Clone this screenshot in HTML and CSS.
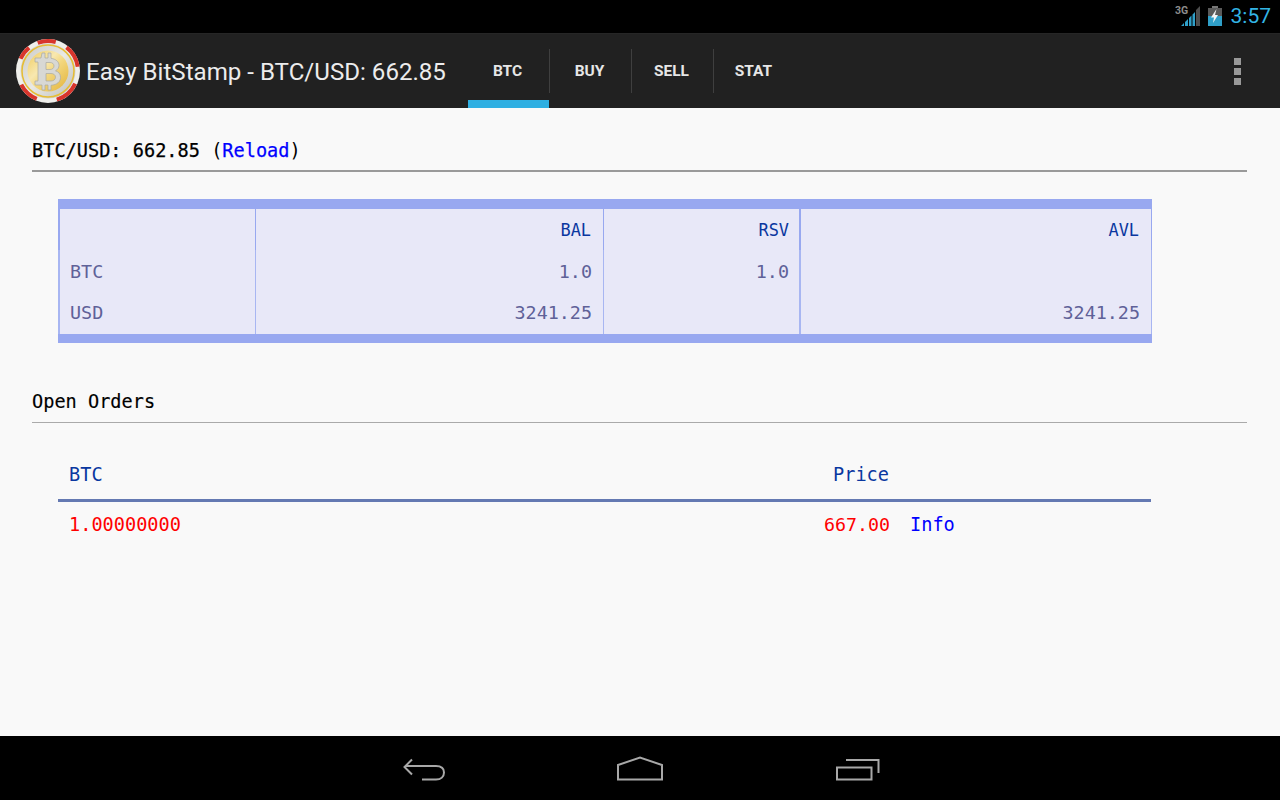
FILE: index.html
```html
<!DOCTYPE html>
<html lang="en">
<head>
<meta charset="utf-8">
<title>Easy BitStamp</title>
<link rel="stylesheet" href="styles.css">
</head>
<body>
<div class="screen">
  <header class="status">
    <svg class="signal" width="26" height="22" viewBox="1175 5 26 22">
      <path d="M1196 10l4-4v20h-4z" fill="#4d4d4d"/>
      <path d="M1181 26l3-3v3zM1185 26v-4l3-3v7zM1189 26v-8l2.500-2.500V26zM1192.500 26V14.500l2.500-2.500V26z" fill="#2f9fc8"/>
      <text x="1175" y="14" class="net">3G</text>
    </svg>
    <svg class="battery" width="14" height="20" viewBox="1208 6 14 20">
      <rect x="1212" y="6" width="6" height="2" fill="#777"/>
      <rect x="1208" y="8" width="14" height="8" fill="#5a5a5a"/>
      <rect x="1208" y="16" width="14" height="10" fill="#2f9fc8"/>
      <path d="M1216.500 9L1211 17.500h3l-1 5.500 5-8h-3z" fill="#f4f4f4"/>
    </svg>
    <span class="clock">3:57</span>
  </header>
  <nav class="actionbar">
    <svg class="coin" width="66" height="66" viewBox="0 0 66 66">
      <defs>
        <linearGradient id="gold" x1="0" y1="0" x2="1" y2="1">
          <stop offset="0" stop-color="#f0cb5c"/>
          <stop offset=".38" stop-color="#f8e8b0"/>
          <stop offset=".55" stop-color="#f3d77e"/>
          <stop offset="1" stop-color="#e2b238"/>
        </linearGradient>
        <linearGradient id="silver" x1="0" y1="0" x2="1" y2="1">
          <stop offset="0" stop-color="#c9c9c4"/>
          <stop offset=".5" stop-color="#e9e9e5"/>
          <stop offset="1" stop-color="#bdbdb8"/>
        </linearGradient>
      </defs>
      <circle cx="33" cy="33" r="32" fill="#efefeb"/>
      <g class="chip-red">
        <circle cx="33" cy="33" r="30" pathLength="360" stroke-dasharray="35 325" transform="rotate(-110 33 33)"/>
        <circle cx="33" cy="33" r="30" pathLength="360" stroke-dasharray="44 316" transform="rotate(-52 33 33)"/>
        <circle cx="33" cy="33" r="30" pathLength="360" stroke-dasharray="48 312" transform="rotate(25 33 33)"/>
        <circle cx="33" cy="33" r="30" pathLength="360" stroke-dasharray="41 319" transform="rotate(112 33 33)"/>
        <circle cx="33" cy="33" r="30" pathLength="360" stroke-dasharray="27 333" transform="rotate(204 33 33)"/>
      </g>
      <circle cx="33" cy="33" r="27.500" fill="url(#silver)"/>
      <circle cx="33" cy="33" r="26" fill="none" stroke="#e6bd33" stroke-width="1.500"/>
      <circle cx="33" cy="33" r="20.500" fill="url(#gold)"/>
      <path d="M27 15h3v5h3v-5h3v5.300c5 .8 8 3.500 8 7 0 2.500-1.500 4.500-3.500 5.500 3 1 5 3 5 6.500 0 4.500-3.500 7.500-9.500 8V52h-3v-5h-3v5h-3v-5h-7v-4h3V24h-3v-4h6zM31 24.500v7h4c2.500 0 4-1.500 4-3.500s-1.500-3.500-4-3.500zM31 35.500v7.500h5c2.500 0 4.500-1.500 4.500-3.800S38.500 35.500 36 35.500z" fill="#d8d8d4" fill-rule="evenodd" stroke="#a9a9a2" stroke-width=".7"/>
    </svg>
    <h1 class="title">Easy BitStamp - BTC/USD: 662.85</h1>
    <ul class="tabs">
      <li class="tab tab-active">BTC</li>
      <li class="tab">BUY</li>
      <li class="tab">SELL</li>
      <li class="tab">STAT</li>
    </ul>
    <div class="overflow"><i></i><i></i><i></i></div>
  </nav>
  <main class="content">
    <h2 class="heading">BTC/USD: 662.85 <span class="plain">(</span><a class="link">Reload</a><span class="plain">)</span></h2>
    <div class="balances">
      <div class="cell cell-first head"></div>
      <div class="cell head">BAL</div>
      <div class="cell head cell-thick">RSV</div>
      <div class="cell head">AVL</div>
      <div class="cell cell-first row">BTC</div>
      <div class="cell row">1.0</div>
      <div class="cell row cell-thick">1.0</div>
      <div class="cell row"></div>
      <div class="cell cell-first row">USD</div>
      <div class="cell row">3241.25</div>
      <div class="cell row cell-thick"></div>
      <div class="cell row">3241.25</div>
    </div>
    <h2 class="heading heading-thin">Open Orders</h2>
    <div class="orders">
      <div class="orders-head">
        <span class="col-btc">BTC</span>
        <span class="col-price">Price</span>
      </div>
      <div class="orders-row">
        <span class="col-btc sell">1.00000000</span>
        <span class="col-price sell">667.00</span>
        <a class="link col-info">Info</a>
      </div>
    </div>
  </main>
  <footer class="navbar">
    <svg width="48" height="32" viewBox="400 752 48 32" fill="none" stroke="#a8a8a8" stroke-width="2">
      <path d="M412 759.500L404.500 767 412 774.500M405 766H436c5 0 8 2.500 8 6.500S441 779.500 436 779.500H422"/>
    </svg>
    <svg width="48" height="32" viewBox="616 752 48 32" fill="none" stroke="#a8a8a8" stroke-width="2">
      <path d="M618 779.500V765L640 757.500 662 765v14.500z"/>
    </svg>
    <svg class="recents" width="48" height="32" viewBox="834 752 48 32" fill="none" stroke="#a8a8a8" stroke-width="2">
      <path d="M846 760H878.500V773M837 767.500H871.500V779.500H837z"/>
    </svg>
  </footer>
</div>
</body>
</html>
```
FILE: styles.css
```css
* { box-sizing: border-box; }
html, body { margin: 0; padding: 0; }
.screen { width: 1280px; height: 800px; display: flex; flex-direction: column; overflow: hidden; background: #f9f9f9; }

.status { height: 33px; background: #000; display: flex; align-items: center; justify-content: flex-end; padding-right: 9px; flex: none; }
.signal { margin-right: 7px; margin-top: -1px; }
.net { font: bold 10.500px "Roboto", sans-serif; fill: #8c8c8c; }
.battery { margin-right: 9px; margin-top: -1px; }
.clock { font: 21px/33px "Roboto", sans-serif; color: #33b5e5; }

.actionbar { height: 75px; background: #212121; display: flex; align-items: center; flex: none; border-top: 1px solid #262626; }
.coin { margin-left: 15px; flex: none; }
.chip-red circle { fill: none; stroke: #d8352c; stroke-width: 4; }
.title { font: 400 24.100px "Roboto", sans-serif; color: #ececec; margin: 2px 0 0 5px; width: 382px; white-space: nowrap; flex: none; }
.tabs { list-style: none; margin: 0; padding: 0; display: flex; height: 74px; flex: none; }
.tab { width: 82px; display: flex; align-items: center; justify-content: center; font: 700 15.500px "Roboto", sans-serif; color: #e6e6e6; position: relative; padding-right: 3px; }
.tab::after { content: ""; position: absolute; right: 0; top: 15px; height: 44px; width: 1px; background: #3f3f3f; }
.tab:last-child::after { display: none; }
.tab-active::before { content: ""; position: absolute; left: 0; right: 1px; bottom: 0; height: 8px; background: #2fafe2; }
.overflow { margin-left: auto; margin-right: 39px; display: flex; flex-direction: column; gap: 3px; }
.overflow i { display: block; width: 7px; height: 7px; background: #999; }

.content { flex: 1; padding: 30px 33px 0 32px; font-family: "DejaVu Sans Mono", monospace; color: #000; }
.heading { margin: 0; font: 400 18.600px/26px "DejaVu Sans Mono", monospace; -webkit-text-stroke: 0.25px currentColor; border-bottom: 2px solid #9a9a9a; height: 34px; }
.heading-thin { border-bottom: 1px solid #aaa; margin-top: 46px; height: 34px; -webkit-text-stroke: 0.15px currentColor; }
.plain { -webkit-text-stroke: 0; }
.link { color: #0000ff; }

.balances { margin: 27px 0 0 26px; width: 1094px; height: 144px; display: grid; grid-template-columns: 198px 348px 197px 351px; grid-template-rows: 41px 41px 43px; background: #e8e8f8; border-top: 10px solid #98a8f0; border-bottom: 9px solid #98a8f0; }
.cell { text-align: right; padding-right: 11px; padding-top: 1px; border-right: 1px solid #a8b6f2; }
.cell-first { text-align: left; padding-left: 10px; border-left: 2px solid #a8b6f2; }
.head { font-size: 16.900px; line-height: 40px; color: #0a37a0; border-color: #98a8f0; padding-right: 12px; }
.row { font-size: 18.400px; line-height: 41px; color: #5f6198; }
.cell-thick { border-right-width: 2px; padding-right: 10px; }

.orders { margin: 26px 0 0 26px; width: 1093px; }
.orders-head { height: 53px; border-bottom: 3px solid #6479b2; display: flex; color: #0a37a0; font-size: 18.600px; line-height: 52px; }
.orders-row { display: flex; font-size: 18.600px; line-height: 46px; }
.col-btc { margin-left: 11px; flex: none; }
.orders-head .col-btc { width: 778px; }
.orders-head .col-price { width: 42px; text-align: left; flex: none; white-space: nowrap; direction: rtl; }
.orders-row .col-btc { width: 755px; }
.orders-row .col-price { width: 64.500px; flex: none; overflow: hidden; font-size: 18.300px; white-space: nowrap; }
.sell { color: #ff0000; }
.col-info { margin-left: 21.500px; }

.navbar { height: 64px; background: #000; display: flex; align-items: center; justify-content: center; gap: 168px; padding-left: 2px; flex: none; }
.recents { margin-left: 2px; }
```
